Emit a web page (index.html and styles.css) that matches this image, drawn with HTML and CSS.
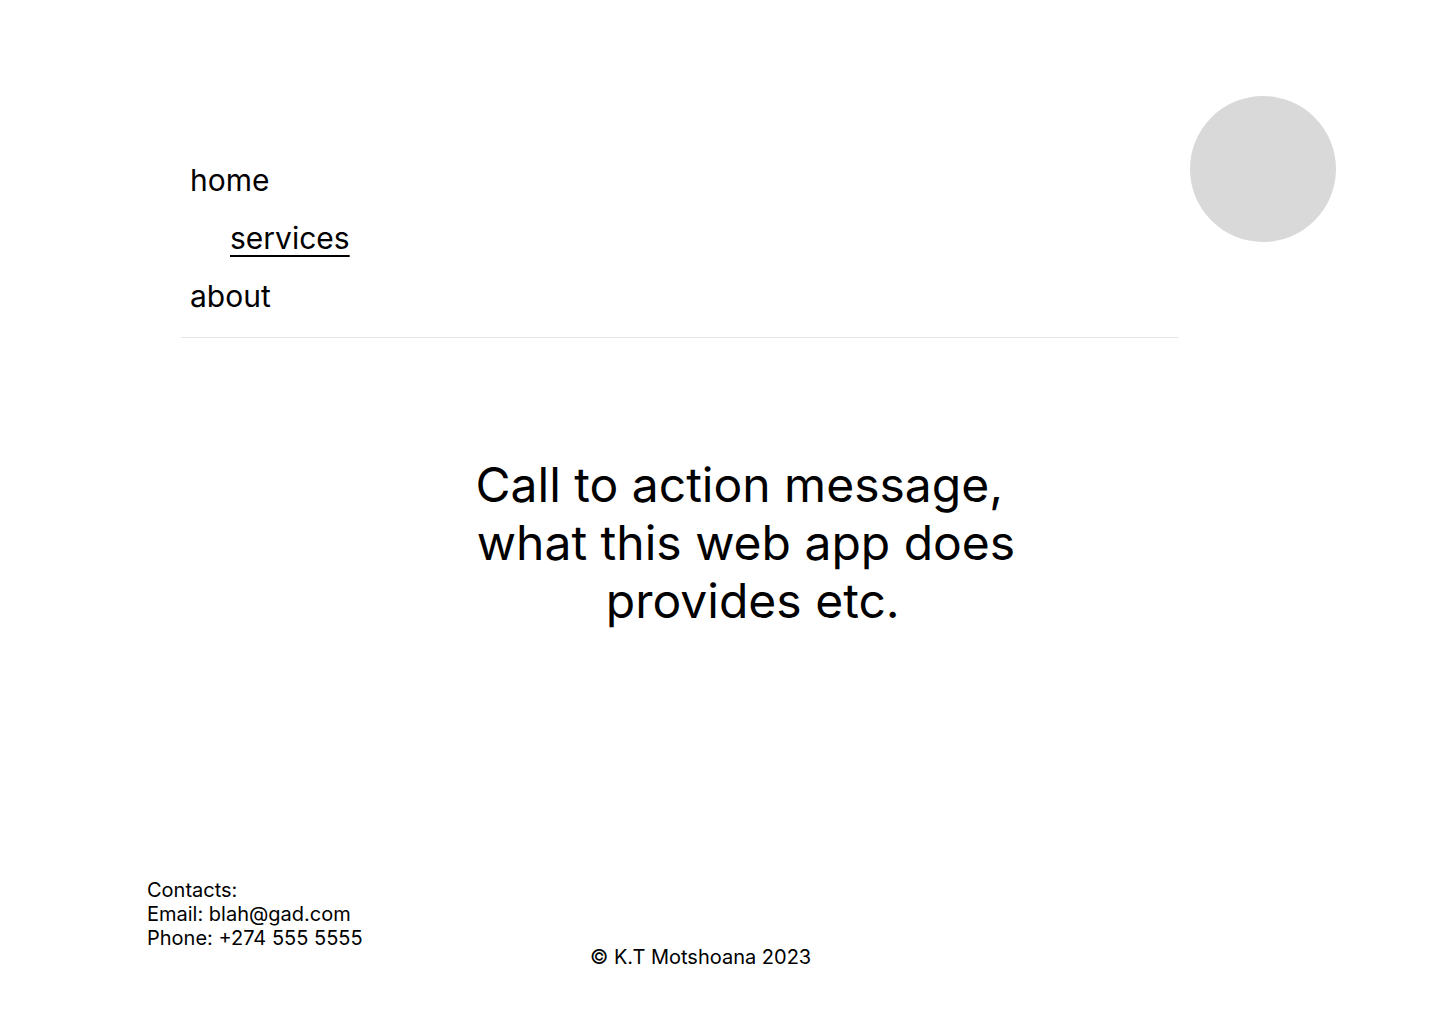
FILE: index.html
```html
<!DOCTYPE html>
<html lang="en">
<head>
<meta charset="utf-8">
<title>Landing</title>
<link rel="stylesheet" href="styles.css">
</head>
<body>
<header class="header">
  <nav class="nav">
    <a class="nav-link" href="#">home</a>
    <a class="nav-link nav-link--active" href="#">services</a>
    <a class="nav-link" href="#">about</a>
  </nav>
  <div class="avatar"></div>
</header>
<main class="hero">
  <p class="hero-text">Call to action message,&nbsp;<br>what this web app does<br>&nbsp;provides etc.</p>
</main>
<footer class="footer">
  <div class="contacts">
    <div>Contacts:</div>
    <div>Email: blah@gad.com</div>
    <div>Phone: +274 555 5555</div>
  </div>
  <div class="copyright">© K.T Motshoana 2023</div>
</footer>
</body>
</html>
```
FILE: styles.css
```css
* { box-sizing: border-box; }
html, body { margin: 0; padding: 0; }
body {
  background: #ffffff;
  color: #000000;
  font-family: Inter, "Noto Sans", sans-serif;
  width: 1440px;
  min-height: 1024px;
}
.header {
  display: flex;
  align-items: flex-start;
  gap: 12px;
  padding: 96px 0 0 181px;
}
.nav {
  width: 997px;
  margin-top: 55px;
  padding: 0 0 12px 9px;
  border-bottom: 1px solid #e4e4e4;
  display: flex;
  flex-direction: column;
  align-items: flex-start;
}
.nav-link {
  font-size: 30px;
  line-height: 58px;
  color: #000;
  text-decoration: none;
}
.nav-link--active {
  margin-left: 40px;
  text-decoration: underline;
  text-decoration-thickness: 2px;
  text-underline-offset: 6px;
}
.avatar {
  width: 146px;
  height: 146px;
  border-radius: 50%;
  background: #d9d9d9;
  flex-shrink: 0;
}
.hero {
  margin: 118px 0 0 446px;
  width: 600px;
}
.hero-text {
  margin: 0;
  font-size: 48px;
  line-height: 58px;
  text-align: center;
}
.footer {
  display: grid;
  grid-template-columns: 443px auto;
  padding-left: 147px;
  margin-top: 248px;
  font-size: 20px;
  line-height: 24px;
}
.copyright {
  margin-top: 67px;
}
```
